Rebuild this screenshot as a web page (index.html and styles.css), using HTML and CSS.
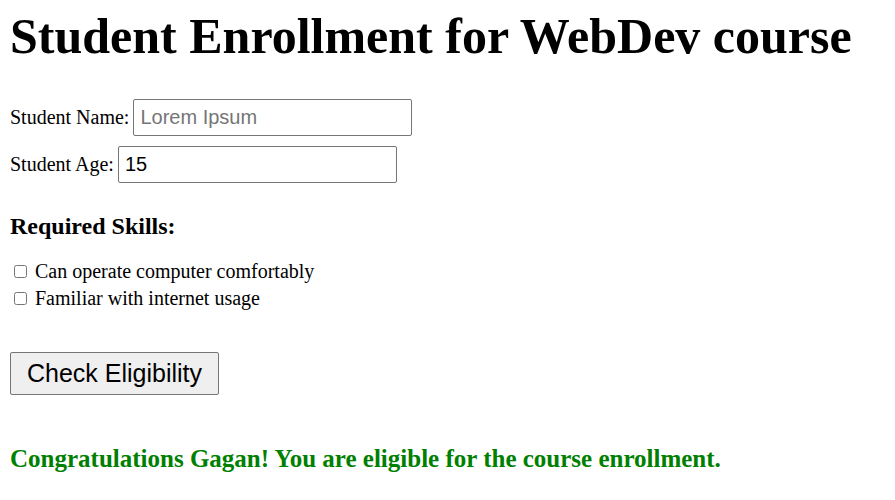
FILE: index.html
```html
<!DOCTYPE html>
<html>
<head>
<meta charset="utf-8">
<link rel="stylesheet" href="styles.css">
</head>
<body>
<h1 class="title">Student Enrollment for WebDev course</h1>
<form class="form">
  <div class="field">
    <label class="field-label" for="name">Student Name:</label>
    <input class="text-input" id="name" type="text" placeholder="Lorem Ipsum">
  </div>
  <div class="field">
    <label class="field-label" for="age">Student Age:</label>
    <input class="text-input" id="age" type="text" value="15">
  </div>
  <h3 class="skills-title">Required Skills:</h3>
  <div class="skills">
    <label class="skill"><input class="check" type="checkbox"> Can operate computer comfortably</label>
    <label class="skill"><input class="check" type="checkbox"> Familiar with internet usage</label>
  </div>
  <button class="btn" type="button">Check Eligibility</button>
</form>
<p class="result">Congratulations Gagan! You are eligible for the course enrollment.</p>
</body>
</html>
```
FILE: styles.css
```css
html, body {
  background: #fff;
}
body {
  margin: 10px;
  font-family: "Liberation Serif", "Times New Roman", serif;
  font-size: 20px;
  color: #000;
}
.title {
  margin: 0;
  font-size: 50px;
  font-weight: bold;
  line-height: 53px;
}
.form {
  margin-top: 36px;
  display: flex;
  flex-direction: column;
  align-items: flex-start;
}
.field {
  display: flex;
  align-items: center;
  margin-bottom: 10px;
}
.field-label {
  margin-right: 4px;
}
.text-input {
  box-sizing: border-box;
  width: 279px;
  height: 37px;
  padding: 1px 6px;
  border: 1px solid #767676;
  border-radius: 2px;
  font-family: "Liberation Sans", Arial, sans-serif;
  font-size: 20px;
  color: #000;
}
.text-input::placeholder {
  color: #757575;
}
.skills-title {
  margin: 20px 0 18px;
  font-size: 24px;
  font-weight: bold;
  line-height: 27px;
}
.skills {
  display: flex;
  flex-direction: column;
}
.skill {
  display: flex;
  align-items: center;
  height: 27px;
}
.check {
  width: 13px;
  height: 13px;
  margin: 0 8px 0 4px;
}
.btn {
  margin-top: 40px;
  height: 43px;
  padding: 0 16px;
  font-family: "Liberation Sans", Arial, sans-serif;
  font-size: 25px;
  color: #000;
  background: #efefef;
  border: 1px solid #767676;
  border-radius: 2px;
}
.result {
  margin: 50px 0 0;
  font-size: 25px;
  font-weight: bold;
  color: #008000;
}
```
